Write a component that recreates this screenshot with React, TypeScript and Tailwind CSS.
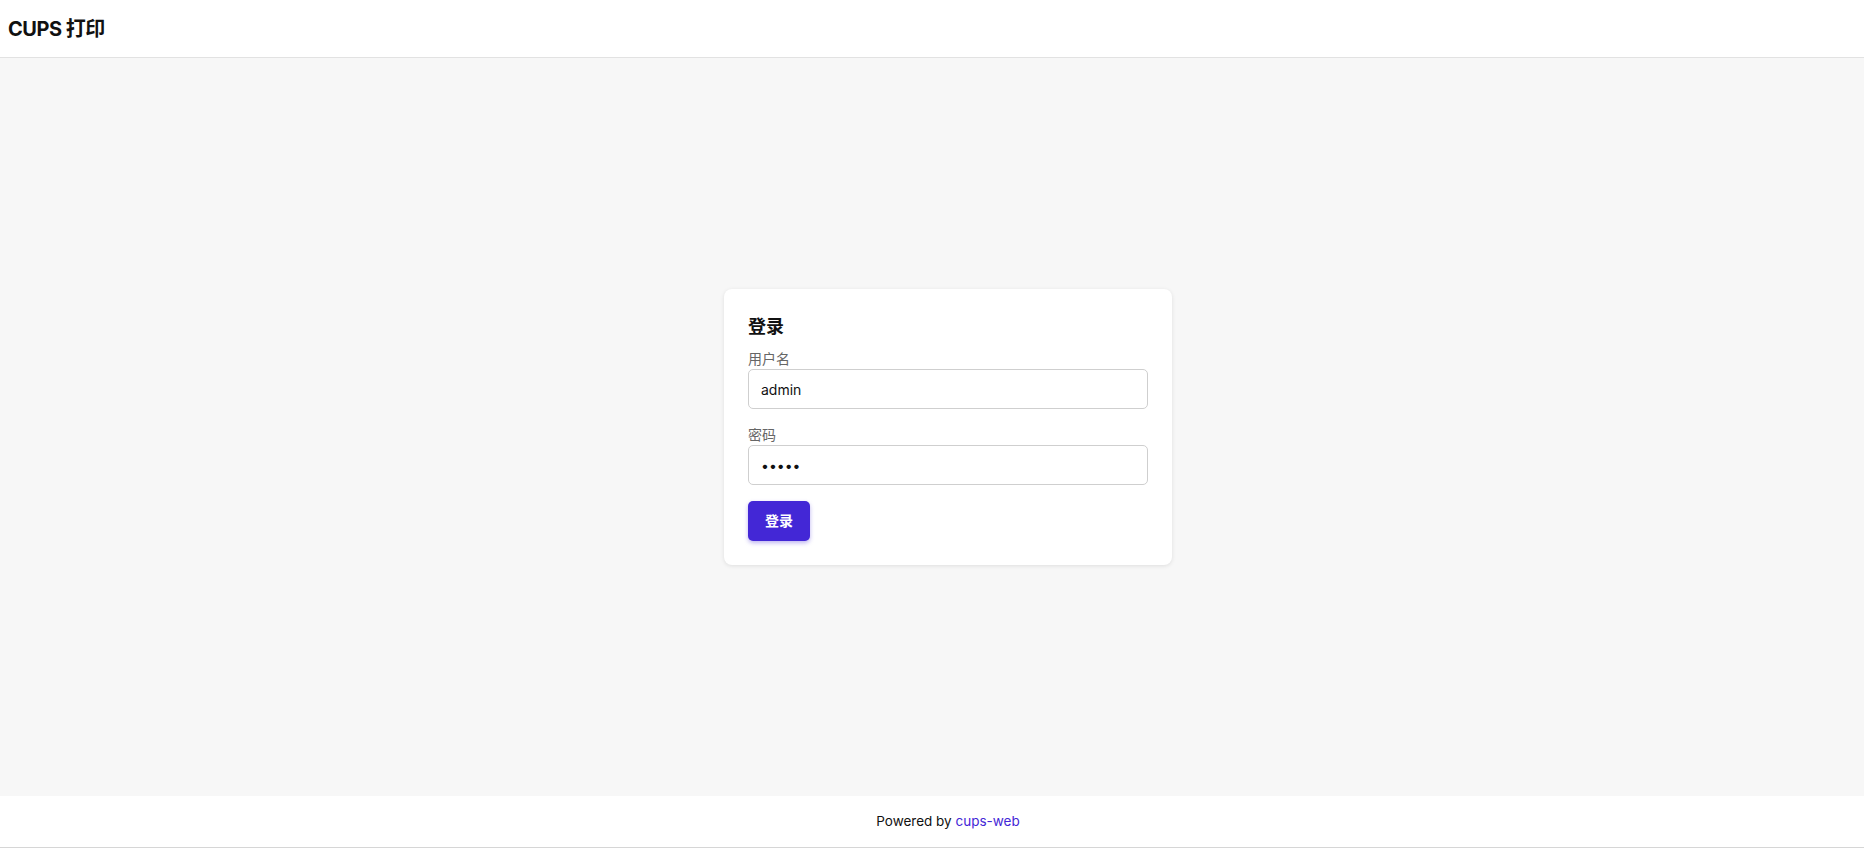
import { useState } from "react";

const LoginPage = () => {
  const [username, setUsername] = useState("admin");
  const [password, setPassword] = useState("admin");

  return (
    <div
      className="min-h-screen flex flex-col bg-white text-[#111]"
      style={{ fontFamily: 'Inter, "Noto Sans CJK SC", sans-serif' }}
    >
      {/* top bar */}
      <header className="h-[58px] flex items-center px-2 bg-white border-b border-[#e2e2e2] shadow-[0_1px_2px_rgba(0,0,0,0.04)]">
        <h1 className="text-xl font-bold tracking-tight">CUPS 打印</h1>
      </header>

      <main className="flex-1 flex items-center justify-center pl-8 bg-[#f7f7f7]">
        <div className="w-[448px] bg-white rounded-lg p-6 shadow-[0_1px_4px_rgba(0,0,0,0.1)]">
          <h2 className="text-lg font-semibold leading-7 mb-2">登录</h2>

          <div className="mb-4">
            <label className="block text-sm leading-5 text-[#666]">用户名</label>
            <input
              type="text"
              value={username}
              onChange={(e) => setUsername(e.target.value)}
              className="block w-full h-10 px-3 text-sm text-[#111] border border-[#cfcfcf] rounded-[5px] outline-none"
            />
          </div>

          <div className="mb-4">
            <label className="block text-sm leading-5 text-[#666]">密码</label>
            <input
              type="password"
              value={password}
              onChange={(e) => setPassword(e.target.value)}
              className="block w-full h-10 px-3 text-sm text-[#111] border border-[#cfcfcf] rounded-[5px] outline-none"
            />
          </div>

          <button
            type="button"
            className="h-10 px-[17px] rounded-[5px] bg-[#4327d6] text-white text-sm font-bold shadow-[0_2px_4px_rgba(67,39,214,0.35)]"
          >
            登录
          </button>
        </div>
      </main>

      <footer className="h-[52px] mb-px flex items-center justify-center pl-8 bg-white text-[13.5px] border-b border-[#d6d6d6]">
        <span>
          Powered by{" "}
          <a href="#" className="text-[#4327d6]">
            cups-web
          </a>
        </span>
      </footer>
    </div>
  );
};

export default LoginPage;
